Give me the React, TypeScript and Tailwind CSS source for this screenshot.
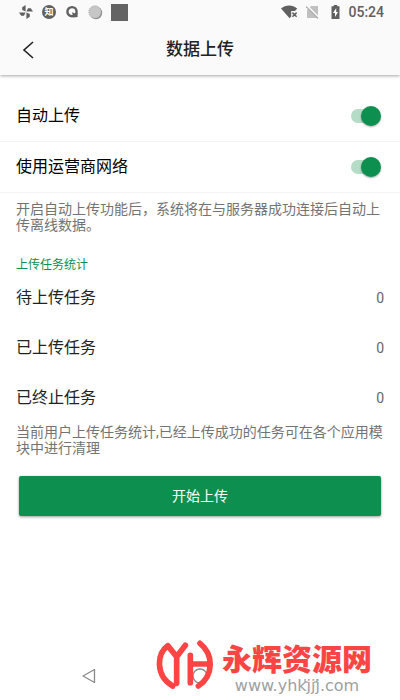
import { useState } from 'react'

const switches = [
  { id: 'auto-upload', label: '自动上传' },
  { id: 'use-carrier', label: '使用运营商网络' },
]

const stats = [
  { label: '待上传任务', value: 0 },
  { label: '已上传任务', value: 0 },
  { label: '已终止任务', value: 0 },
]

function StatusBar() {
  return (
    <div className="flex h-6 items-center justify-between pl-[18px] pr-4 text-[#606060]">
      <div className="flex items-center gap-2">
        <svg width="16" height="16" viewBox="0 0 16 16" fill="currentColor" aria-hidden="true">
          <path d="M7.600 7.600V1L4.200 3.200V6zM8.400 7.600H15L12.800 4.200H10zM8.400 8.400V15l3.400-2.200V10zM7.600 8.400H1l2.200 3.400H6z" />
        </svg>
        <span className="flex size-[14px] items-center justify-center rounded-full bg-[#606060] text-[9px] font-bold leading-none text-white">
          知
        </span>
        <svg width="16" height="16" viewBox="0 0 16 16" fill="none" aria-hidden="true">
          <circle cx="8" cy="7.7" r="4.6" stroke="currentColor" strokeWidth="2.4" />
          <path d="M8 8.6c2 0 2.6 1.6 5.6.2V13l-4 .6z" fill="currentColor" />
        </svg>
        <svg width="15" height="15" viewBox="0 0 15 15" aria-hidden="true">
          <circle cx="8" cy="8" r="6.2" fill="#888" />
          <circle cx="7" cy="7" r="6.2" fill="#c6c6c6" stroke="#aaa" strokeDasharray="1 1" />
        </svg>
        <span className="size-[17px] bg-[#636363]" />
      </div>
      <div className="flex items-center gap-2">
        <svg width="17" height="14" viewBox="0 0 17 14" aria-hidden="true">
          <path d="M0 3.400C4.800-.5 11.400-.5 16.200 3.400L14 6h-3.800v5.400L8.600 13.200z" fill="currentColor" />
          <path d="M11.400 7.600l4.200 4.200m0-4.200l-4.200 4.200" stroke="currentColor" strokeWidth="1.500" />
        </svg>
        <svg width="13" height="14" viewBox="0 0 13 14" aria-hidden="true">
          <path d="M5 1h7v12H1V5z" fill="#c0c0c0" />
          <path d="M1 .5l12 12" stroke="#fafafa" strokeWidth="1.500" />
          <path d="M0 1.500l12 12" stroke="#b0b0b0" strokeWidth="1.200" />
        </svg>
        <svg width="9" height="14" viewBox="0 0 9 14" className="ml-1" aria-hidden="true">
          <path d="M2.800 0h3.400v1.300H8.500V14H.5V1.300h2.300z" fill="currentColor" />
          <path d="M5.200 3L2 8h2v4l3-5H5.200z" fill="#fff" />
        </svg>
        <span className="font-['Roboto',sans-serif] text-sm font-medium leading-none">05:24</span>
      </div>
    </div>
  )
}

function SwitchRow({ id, label }: { id: string; label: string }) {
  const [checked, setChecked] = useState(true)

  return (
    <div className="flex h-[51px] items-center justify-between border-b border-[#f3f3f3] pl-4 pr-[19px]">
      <label htmlFor={id} className="text-base text-black">
        {label}
      </label>
      <input
        id={id}
        type="checkbox"
        role="switch"
        checked={checked}
        onChange={(e) => setChecked(e.target.checked)}
        className="flex h-5 w-[30px] appearance-none items-center before:h-[14px] before:w-[26px] before:shrink-0 before:rounded-full before:bg-gray-300 after:-ml-4 after:size-5 after:shrink-0 after:rounded-full after:bg-gray-100 after:shadow-[0_1px_2px_rgba(0,0,0,0.35)] checked:before:bg-[#b4dcc7] checked:after:bg-[#0d904f]"
      />
    </div>
  )
}

function NavBar() {
  return (
    <nav className="flex h-12 items-center justify-around px-[34px] text-[#8a8a8a]">
      <button type="button" aria-label="返回" className="flex size-6 items-center justify-center">
        <svg width="16" height="16" viewBox="0 0 16 16" fill="none" stroke="currentColor" strokeWidth="1.300">
          <path d="M13.500 1.500v13L2 8z" strokeLinejoin="round" />
        </svg>
      </button>
      <button type="button" aria-label="主屏幕" className="flex size-6 items-center justify-center">
        <svg width="16" height="16" viewBox="0 0 16 16" fill="none" stroke="currentColor" strokeWidth="1.300">
          <circle cx="8" cy="8" r="7" />
        </svg>
      </button>
      <button type="button" aria-label="最近任务" className="flex size-6 items-center justify-center">
        <svg width="14" height="14" viewBox="0 0 14 14" fill="none" stroke="currentColor">
          <path d="M4 1H1v3M10 1h3v3M4 13H1v-3M10 13h3v-3" />
        </svg>
      </button>
    </nav>
  )
}

function Watermark() {
  return (
    <div className="pointer-events-none absolute bottom-1 right-7 flex items-end gap-2">
      <svg
        width="58"
        height="50"
        viewBox="280 30 174 150"
        fill="none"
        stroke="#fb4545"
        strokeWidth="17"
        strokeLinecap="round"
        strokeLinejoin="round"
        className="mb-1.5"
        aria-hidden="true"
      >
        <path d="M330 168C278 138 282 72 315 47L342 80V160M342 80L368 46" />
        <path d="M383 76V158M383 102H438M412 40C454 74 453 138 407 168" />
      </svg>
      <div className="flex flex-col items-center">
        <span className="text-[30px] font-black leading-8 text-[#fb4545]">永辉资源网</span>
        <span className="font-['DejaVu_Sans',sans-serif] text-base leading-5 text-[#a0a0a0]">www.yhkjjj.com</span>
      </div>
    </div>
  )
}

export default function App() {
  return (
    <div className="relative flex min-h-screen flex-col bg-white font-['Roboto','Noto_Sans_CJK_SC',sans-serif]">
      <header className="z-10 bg-[#fafafa] shadow-[0_1px_3px_rgba(0,0,0,0.35)]">
        <StatusBar />
        <div className="grid h-[51px] grid-cols-[56px_1fr_56px] items-center">
          <button type="button" aria-label="返回" className="flex h-10 items-center justify-center text-[#222]">
            <svg width="14" height="20" viewBox="0 0 14 20" fill="none" stroke="currentColor" strokeWidth="1.600">
              <path d="M12 2L3 10l9 8" />
            </svg>
          </button>
          <h1 className="text-center text-[17px] font-medium text-[#222]">数据上传</h1>
        </div>
      </header>

      <main className="flex flex-1 flex-col pt-4">
        {switches.map((item) => (
          <SwitchRow key={item.id} {...item} />
        ))}
        <p className="pl-4 pr-3 pt-2 text-sm leading-4 text-[#737373]">
          开启自动上传功能后，系统将在与服务器成功连接后自动上传离线数据。
        </p>

        <h2 className="mt-6 px-4 text-xs text-[#0d904f]">上传任务统计</h2>
        <dl>
          {stats.map(({ label, value }) => (
            <div key={label} className="flex h-[50px] items-center justify-between px-4">
              <dt className="text-base text-[#222]">{label}</dt>
              <dd className="text-sm text-[#666]">{value}</dd>
            </div>
          ))}
        </dl>
        <p className="pl-4 pr-3 pt-px text-sm leading-4 text-[#737373]">
          当前用户上传任务统计,已经上传成功的任务可在各个应用模块中进行清理
        </p>

        <button
          type="button"
          className="mx-[19px] mt-5 h-10 rounded-xs bg-[#0d904f] text-sm text-white shadow-[0_1px_3px_rgba(0,0,0,0.4)]"
        >
          开始上传
        </button>
      </main>

      <NavBar />
      <Watermark />
    </div>
  )
}
